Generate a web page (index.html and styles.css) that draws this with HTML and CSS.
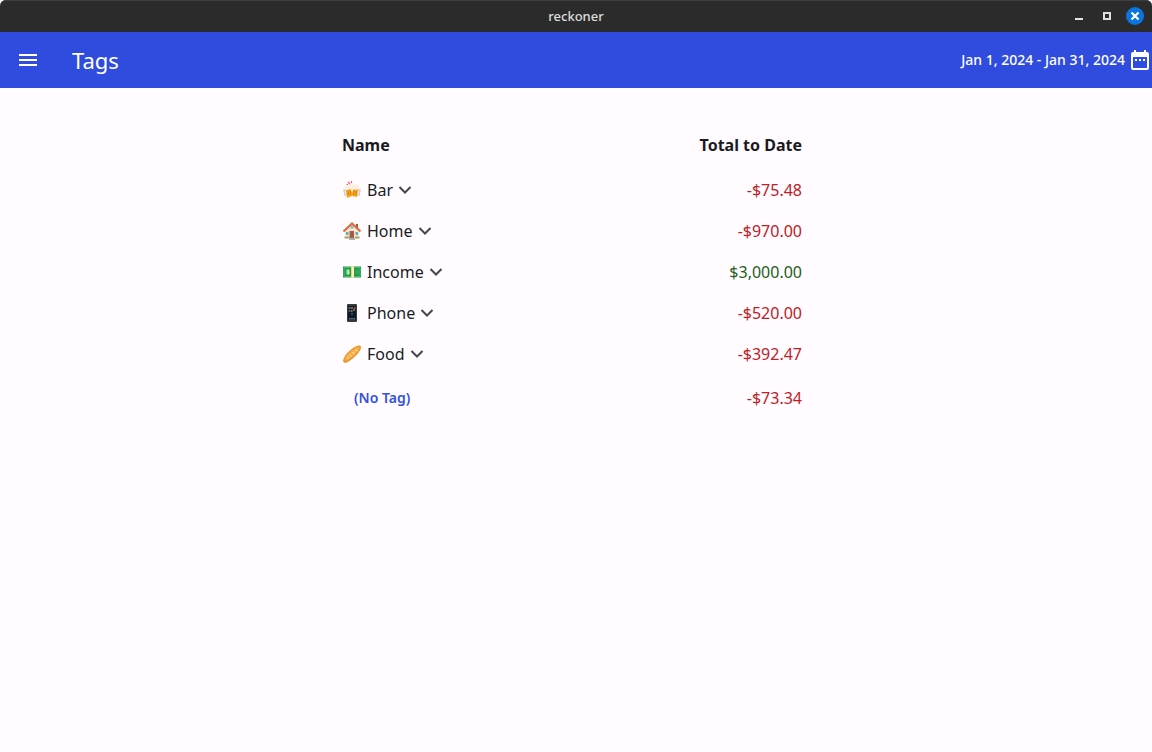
FILE: index.html
```html
<!DOCTYPE html>
<html lang="en">
<head>
<meta charset="utf-8">
<meta name="viewport" content="width=device-width, initial-scale=1">
<title>reckoner</title>
<link rel="stylesheet" href="styles.css">
</head>
<body>
<div class="window">
  <header class="titlebar">
    <span class="window-title">reckoner</span>
    <div class="window-controls">
      <button type="button" class="control" aria-label="Minimize"><svg width="20" height="20" viewBox="0 0 20 20"><path d="M6 12h8v2H6z" fill="#e6e6e6"/></svg></button>
      <button type="button" class="control" aria-label="Maximize"><svg width="20" height="20" viewBox="0 0 20 20"><path d="M7 7h6v6H7z" fill="none" stroke="#dedede" stroke-width="2"/></svg></button>
      <button type="button" class="control" aria-label="Close"><svg width="20" height="20" viewBox="0 0 20 20"><circle cx="10" cy="10" r="9" fill="#0c74df"/><path d="M6.500 6.500l7 7M13.500 6.500l-7 7" stroke="#fff" stroke-width="2.200"/></svg></button>
    </div>
  </header>
  <nav class="appbar">
    <button type="button" class="menu" aria-label="Open menu"><svg width="24" height="24" viewBox="0 0 24 24"><path d="M3 18h18v-2H3zm0-5h18v-2H3zm0-7v2h18V6z" fill="#fff"/></svg></button>
    <h1 class="page-title">Tags</h1>
    <button type="button" class="date-range">Jan 1, 2024 - Jan 31, 2024<svg width="24" height="24" viewBox="0 0 24 24"><path d="M19 4h-1V2h-2v2H8V2H6v2H5c-1.100 0-2 .9-2 2v14c0 1.100.9 2 2 2h14c1.100 0 2-.9 2-2V6c0-1.100-.9-2-2-2zm0 16H5V9h14zM7 11h2v2H7zm4 0h2v2h-2zm4 0h2v2h-2z" fill="#fff" fill-rule="evenodd"/></svg></button>
  </nav>
  <main class="content">
    <table class="tags">
      <thead>
        <tr><th scope="col">Name</th><th scope="col" class="total">Total to Date</th></tr>
      </thead>
      <tbody>
        <tr>
          <td><button type="button" class="tag"><svg class="emoji" width="20" height="20" viewBox="0 0 20 20"><path d="M4 10H2l1 5h2M16 10h2l-1 5h-2" fill="none" stroke="#ccd0d2" stroke-width="1.500"/><path d="M3.500 8l6-1 .5 9-5 2zM10.500 7l6 1-1.500 9-5-1z" fill="#f8a917"/><path d="M6 11l.7 4M8.500 10l.3 5M12 10l-.3 5M14.500 11l-.7 4" stroke="#d9780d"/><path d="M3 10c-2-3 1-5 3-4 1-3 4-3 5-1 3-2 7 0 6 4l-3 1-2-1-2 3-2-3-3 1z" fill="#fbefe0"/><path d="M6 2l2 2M9.500 1v2M6 4.500H4.500" stroke="#f25c70" stroke-width="1.200"/></svg><span>Bar</span><svg class="chevron" width="24" height="24" viewBox="0 0 24 24"><path d="M6.500 9l5.500 5.500L17.500 9" fill="none" stroke="#46464f" stroke-width="2"/></svg></button></td>
          <td class="total negative">-$75.48</td>
        </tr>
        <tr>
          <td><button type="button" class="tag"><svg class="emoji" width="20" height="20" viewBox="0 0 20 20"><path d="M14 3h2v6h-2z" fill="#a85338"/><path d="M3 9l7-6 7 6v8H3z" fill="#f4e7d2"/><path d="M8.500 4.500h3v3h-3z" fill="#8fb9c8"/><path d="M1.500 10.500L10 2.500l8.500 8" fill="none" stroke="#dd6b41" stroke-width="2.200"/><path d="M7.500 10h4.500v7H7.500z" fill="#a85a43"/><path d="M4 11h2.500v3H4zM13.500 11H16v3h-2.500z" fill="#62aebc"/><path d="M2.500 15.500H7v2H2.500zM13 15.500h4.500v2H13z" fill="#a6a369"/><path d="M7 17h6v2H7z" fill="#aab1b4"/></svg><span>Home</span><svg class="chevron" width="24" height="24" viewBox="0 0 24 24"><path d="M6.500 9l5.500 5.500L17.500 9" fill="none" stroke="#46464f" stroke-width="2"/></svg></button></td>
          <td class="total negative">-$970.00</td>
        </tr>
        <tr>
          <td><button type="button" class="tag"><svg class="emoji" width="20" height="20" viewBox="0 0 20 20"><path d="M1 4.500h18v11H1z" fill="#219b4c"/><path d="M2 5.500h16v9H2z" fill="none" stroke="#47b96a"/><ellipse cx="6" cy="10" rx="2" ry="3" fill="#79ca83"/><path d="M7 8.500H5.500v1.500H7v1.500H5M6 7.500v5" fill="none" stroke="#d5edbd" stroke-width=".7"/><circle cx="15" cy="10" r="2.200" fill="#36a85a"/><path d="M9 4.500h3v11H9z" fill="#fff0b5"/><path d="M9 4.500h1v11H9z" fill="#f2d478"/></svg><span>Income</span><svg class="chevron" width="24" height="24" viewBox="0 0 24 24"><path d="M6.500 9l5.500 5.500L17.500 9" fill="none" stroke="#46464f" stroke-width="2"/></svg></button></td>
          <td class="total positive">$3,000.00</td>
        </tr>
        <tr>
          <td><button type="button" class="tag"><svg class="emoji" width="20" height="20" viewBox="0 0 20 20"><rect x="5" y="1" width="10" height="18" rx="1" fill="#34393e"/><path d="M6 3h8v14H6z" fill="#101b25"/><path d="M6.500 4h2v2h-2zM11 6h2v2h-2z" fill="#367a9b"/><path d="M9 4h2v2H9zM12 4h1.500v2H12zM8.500 7h2v2h-2z" fill="#b75326"/><path d="M6.500 7h1.500v2H6.500zM9 10h2v1.500H9z" fill="#236780"/><path d="M7 15h1.500v1.500H7zM11.500 15H13v1.500h-1.500z" fill="#249fc2"/><path d="M9 15h2v1.500H9z" fill="#a84345"/></svg><span>Phone</span><svg class="chevron" width="24" height="24" viewBox="0 0 24 24"><path d="M6.500 9l5.500 5.500L17.500 9" fill="none" stroke="#46464f" stroke-width="2"/></svg></button></td>
          <td class="total negative">-$520.00</td>
        </tr>
        <tr>
          <td><button type="button" class="tag"><svg class="emoji" width="20" height="20" viewBox="0 0 20 20"><path d="M1.500 15C3 10 12 1.500 17 1.500c2 0 2.500 1.500 1.500 4C16.500 10 8.500 17 4.500 18.500c-3 1-4-1-3-3.500z" fill="#e9942c"/><path d="M3 14C5 10 13 3 16.500 3c2 0 1 2 0 3.500C14 10 8 15 5 16.500c-2 1-3-.5-2-2.500z" fill="#f3b14b"/><path d="M5 13l2 1.500M7.500 10.500l2.500 2M10 8l3 2M13 5.500l2.500 1.500" stroke="#ffe09a" stroke-width="1"/></svg><span>Food</span><svg class="chevron" width="24" height="24" viewBox="0 0 24 24"><path d="M6.500 9l5.500 5.500L17.500 9" fill="none" stroke="#46464f" stroke-width="2"/></svg></button></td>
          <td class="total negative">-$392.47</td>
        </tr>
        <tr class="untagged">
          <td><button type="button" class="text-button">(No Tag)</button></td>
          <td class="total negative">-$73.34</td>
        </tr>
      </tbody>
    </table>
  </main>
</div>
</body>
</html>
```
FILE: styles.css
```css
* {
  box-sizing: border-box;
}

body {
  margin: 0;
  background: #fffbff;
  color: #1b1b1f;
  font: 16px/24px "Noto Sans", "Open Sans", sans-serif;
}

button {
  display: flex;
  align-items: center;
  margin: 0;
  padding: 0;
  border: 0;
  background: none;
  color: inherit;
  font: inherit;
  cursor: pointer;
}

svg {
  display: block;
  flex: none;
}

.window {
  display: flex;
  flex-direction: column;
  min-height: 100vh;
}

.titlebar {
  display: grid;
  grid-template-columns: 1fr auto 1fr;
  align-items: center;
  height: 32px;
  padding: 0 7px;
  border-radius: 6px 6px 0 0;
  background: #2b2b2b;
  box-shadow: inset 0 1px #3d3d3d;
  color: #dedede;
}

.window-title {
  grid-column: 2;
  font-size: 13px;
  font-weight: 500;
}

.window-controls {
  display: flex;
  justify-content: flex-end;
  gap: 8px;
}

.appbar {
  display: flex;
  align-items: center;
  height: 56px;
  padding-left: 16px;
  background: #304cdf;
  color: #fff;
}

.page-title {
  flex: 1;
  margin: 0 0 0 32px;
  font-size: 22px;
  font-weight: 400;
  line-height: 28px;
}

.date-range {
  gap: 3px;
  font-size: 14px;
  font-weight: 500;
}

.content {
  display: flex;
  justify-content: center;
  padding: 33px 16px;
}

.tags {
  width: 100%;
  max-width: 468px;
  border-collapse: collapse;
}

.tags th,
.tags td {
  height: 41px;
  padding: 0;
  text-align: left;
}

.tags th {
  height: 48px;
  font-weight: 700;
}

.tags .untagged td {
  height: 48px;
}

.tags .total {
  padding-right: 8px;
  text-align: right;
}

.tag .emoji {
  margin-right: 5px;
}

.negative {
  color: #bd2025;
}

.positive {
  color: #1b6020;
}

.text-button {
  padding: 8px 12px;
  color: #3451df;
  font-size: 14px;
  font-weight: 600;
}
```
